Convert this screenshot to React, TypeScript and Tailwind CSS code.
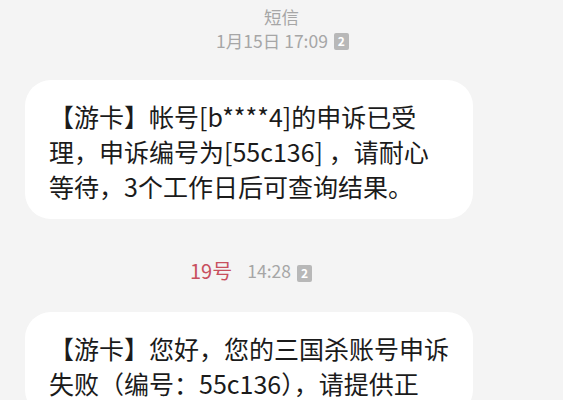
import React from 'react';

const font = { fontFamily: '"Noto Sans CJK SC", "Noto Sans", sans-serif' };

function SimBadge() {
  return (
    <span className="inline-flex h-[17px] w-[15px] items-center justify-center rounded-[2px] bg-[#b8b8b8] text-[12px] font-bold leading-none text-white">
      2
    </span>
  );
}

function Bubble({ lines }: { lines: string[] }) {
  return (
    <div className="ml-[25px] w-[448px] rounded-[26px] bg-white pl-[24px] pr-4 pt-[19px] pb-[15px] text-[25px] leading-[35px] text-[#1b1b1b]">
      {lines.map((l, i) => (
        <div key={i} className="whitespace-nowrap">
          {l}
        </div>
      ))}
    </div>
  );
}

export default function App() {
  return (
    <div className="h-[400px] w-[563px] overflow-hidden bg-[#f4f4f4]" style={font}>
      <div className="pt-[5px] text-center text-[17.5px] leading-[24px] text-[#a6a6a6]">短信</div>
      <div className="flex items-center justify-center gap-[6px] pl-[2px] text-[17.5px] leading-[24px] text-[#a6a6a6]">
        <span>1月15日 17:09</span>
        <SimBadge />
      </div>

      <div className="mt-[27px]">
        <Bubble
          lines={[
            '【游卡】帐号[b****4]的申诉已受',
            '理，申诉编号为[55c136] ，请耐心',
            '等待，3个工作日后可查询结果。',
          ]}
        />
      </div>

      <div className="mt-[39px] flex items-center pl-[190px] leading-[26px]">
        <span className="text-[20px] text-[#c8505e]">19号</span>
        <span className="ml-[15px] text-[17.5px] text-[#a6a6a6]">14:28</span>
        <span className="ml-[6px]">
          <SimBadge />
        </span>
      </div>

      <div className="mt-[28px]">
        <Bubble
          lines={[
            '【游卡】您好，您的三国杀账号申诉',
            '失败（编号：55c136），请提供正',
          ]}
        />
      </div>
    </div>
  );
}
